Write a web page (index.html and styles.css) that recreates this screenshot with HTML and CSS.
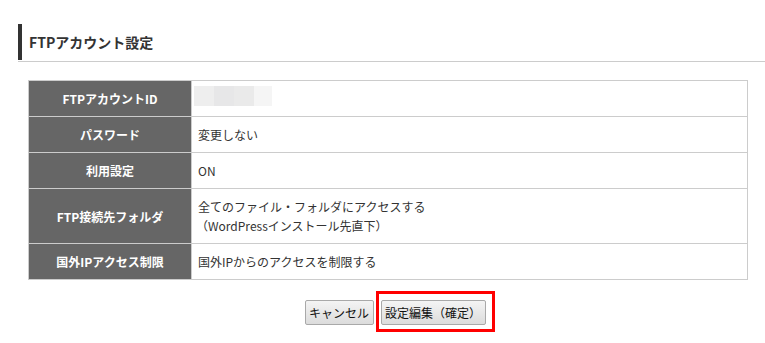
FILE: index.html
```html
<!DOCTYPE html>
<html>
<head>
    <meta charset="utf-8">
    <title>FTPアカウント設定</title>
    <link rel="stylesheet" href="styles.css">
</head>
<body>
    <div class="page">
        <h2 class="section-title"><span>FTPアカウント設定</span></h2>

        <table class="detail-table">
            <tr>
                <th>FTPアカウントID</th>
                <td>
                    <div class="masked">
                        <i class="m1"></i><i class="m2"></i><i class="m3"></i><i class="m4"></i>
                    </div>
                </td>
            </tr>
            <tr>
                <th>パスワード</th>
                <td>変更しない</td>
            </tr>
            <tr>
                <th>利用設定</th>
                <td>ON</td>
            </tr>
            <tr>
                <th>FTP接続先フォルダ</th>
                <td>全てのファイル・フォルダにアクセスする<br><span class="sub">（WordPressインストール先直下）</span></td>
            </tr>
            <tr>
                <th>国外IPアクセス制限</th>
                <td>国外IPからのアクセスを制限する</td>
            </tr>
        </table>

        <div class="actions">
            <button type="button" class="btn btn-cancel">キャンセル</button>
            <span class="highlight">
                <button type="submit" class="btn btn-confirm">設定編集（確定）</button>
            </span>
        </div>
    </div>
</body>
</html>
```

FILE: styles.css
```css
* {
    padding: 0;
    margin: 0;
    box-sizing: border-box
}

body {
    background-color: #fff;
    color: #333;
    font-family: Meiryo, "Noto Sans CJK JP", "Noto Sans", sans-serif;
    font-size: 12px
}

.page {
    padding-left: 18px
}

.section-title {
    margin-top: 24px;
    padding-bottom: 1px;
    border-bottom: 1px solid #ccc;
    font-size: 14px;
    font-weight: bold;
    color: #333
}

.section-title span {
    display: flex;
    align-items: center;
    height: 36px;
    padding-left: 7px;
    border-left: 4px solid #333
}

.detail-table {
    margin: 18px 0 0 10px;
    width: 720px;
    border-collapse: collapse;
    border: 1px solid #ccc
}

.detail-table th,
.detail-table td {
    border: 1px solid #ccc;
    padding: 8px 6px;
    height: 35px;
    line-height: 19px;
    vertical-align: middle
}

.detail-table th {
    width: 163px;
    background-color: #666;
    color: #fff;
    font-weight: bold;
    text-align: center
}

.detail-table td {
    text-align: left;
    color: #333
}

.detail-table .sub {
    margin-left: -2px
}

.masked {
    display: flex;
    height: 20px;
    margin: -3px 0 2px -4px
}

.masked i {
    display: block;
    width: 20px;
    height: 20px
}

.masked .m1 { background-color: #eeeeee }
.masked .m2 { background-color: #e7e7e8 }
.masked .m3 { background-color: #eaeaea }
.masked .m4 { width: 18px; background-color: #f5f5f5 }

.actions {
    display: flex;
    justify-content: center;
    align-items: flex-start;
    margin-top: 11px;
    padding-left: 33px;
    width: 730px
}

.btn {
    height: 25px;
    font-family: Meiryo, "Noto Sans CJK JP", sans-serif;
    font-size: 12px;
    color: #111;
    background: linear-gradient(#f4f4f4, #dcdcdc);
    border: 1px solid #a9a9a9;
    border-radius: 2px;
    padding: 0
}

.btn-cancel {
    width: 69px;
    margin-top: 9px
}

.highlight {
    display: block;
    margin-left: 2px;
    padding: 6px 6px 4px 2px;
    border: 3px solid #f00
}

.btn-confirm {
    display: block;
    width: 105px
}
```
